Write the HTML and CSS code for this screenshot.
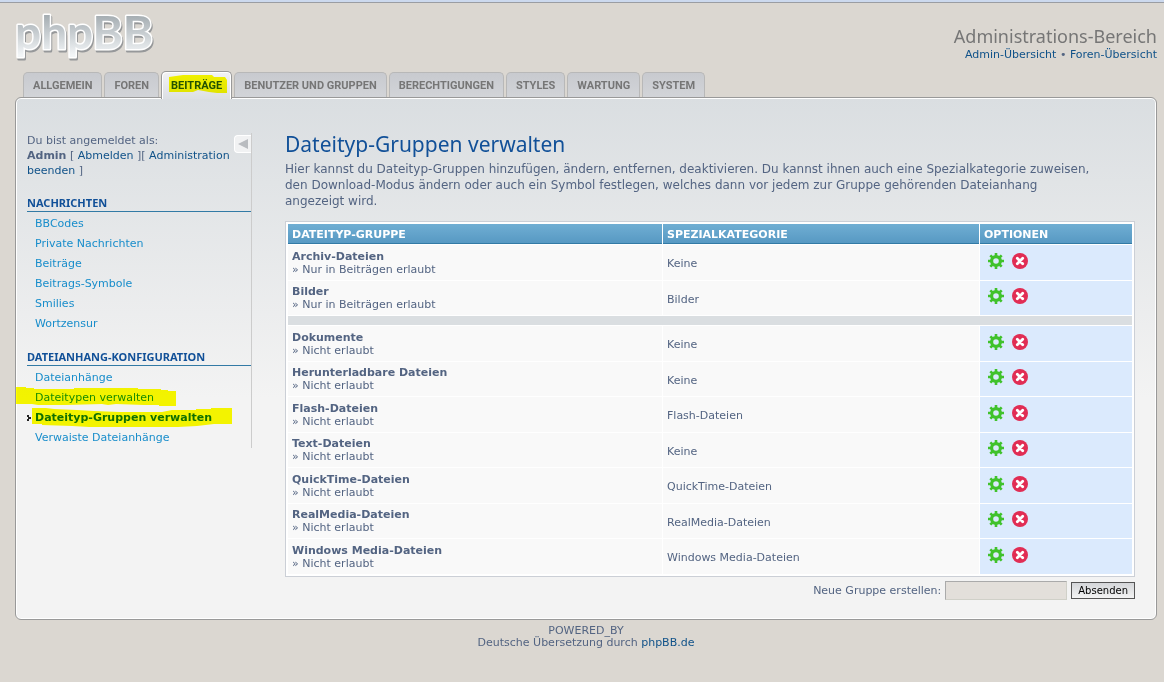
FILE: index.html
```html
<!DOCTYPE html>
<html lang="de">
<head>
<meta charset="utf-8">
<title>Dateityp-Gruppen verwalten</title>
<link rel="stylesheet" href="styles.css">
</head>
<body>
<svg class="defs" width="0" height="0" aria-hidden="true">
  <symbol id="gear" viewBox="0 0 16 16">
    <circle cx="8" cy="8" r="4.400" fill="none" stroke="#40c22b" stroke-width="3.200"/>
    <path d="M8 0v3M8 13v3M0 8h3M13 8h3M2.300 2.300l2.200 2.200M11.500 11.500l2.200 2.200M2.300 13.700l2.200-2.200M11.500 4.500l2.200-2.200" stroke="#40c22b" stroke-width="2.600"/>
  </symbol>
  <symbol id="cross" viewBox="0 0 16 16">
    <circle cx="8" cy="8" r="8" fill="#e12d54"/>
    <path d="M5.300 5.300l5.400 5.400M10.700 5.300l-5.400 5.400" stroke="#fff" stroke-width="2.800" stroke-linecap="round"/>
  </symbol>
</svg>

<header class="header">
  <a class="logo" href="#" aria-label="phpBB">
    <svg width="144" height="54" viewBox="0 0 144 54">
      <defs>
        <linearGradient id="logo-fill" gradientUnits="userSpaceOnUse" x1="0" y1="4" x2="0" y2="44">
          <stop offset="0" stop-color="#a4acb1"/>
          <stop offset="1" stop-color="#f2f5f7"/>
        </linearGradient>
      </defs>
      <text class="logo-text logo-shadow" x="1" y="40">phpBB</text>
      <text class="logo-text logo-edge" x="0" y="38">phpBB</text>
      <text class="logo-text logo-face" x="0" y="38">phpBB</text>
    </svg>
  </a>
  <div class="header-side">
    <h1>Administrations-Bereich</h1>
    <p><a href="#">Admin-Übersicht</a> • <a href="#">Foren-Übersicht</a></p>
  </div>
</header>

<nav class="tabs">
  <a href="#">ALLGEMEIN</a>
  <a href="#">FOREN</a>
  <a href="#" class="active">BEITRÄGE<svg class="marker marker-tab" viewBox="0 0 58 20" preserveAspectRatio="none"><path d="M0 2L14 0H43L45 2H56L58 5V18H48L40 17 29 15 24 17H0z"/></svg></a>
  <a href="#">BENUTZER UND GRUPPEN</a>
  <a href="#">BERECHTIGUNGEN</a>
  <a href="#">STYLES</a>
  <a href="#">WARTUNG</a>
  <a href="#">SYSTEM</a>
</nav>

<div class="panel">
  <aside class="sidebar">
    <button class="toggle" type="button" aria-label="Menü ausblenden"><svg width="10" height="10" viewBox="0 0 10 10"><path d="M0 5L10 0V10z" fill="#b9bcc0"/></svg></button>
    <p class="login">Du bist angemeldet als:<br><strong>Admin</strong> [ <a href="#">Abmelden</a> ][ <a href="#">Administration beenden</a> ]</p>
    <h2>NACHRICHTEN</h2>
    <ul>
      <li><a href="#">BBCodes</a></li>
      <li><a href="#">Private Nachrichten</a></li>
      <li><a href="#">Beiträge</a></li>
      <li><a href="#">Beitrags-Symbole</a></li>
      <li><a href="#">Smilies</a></li>
      <li><a href="#">Wortzensur</a></li>
    </ul>
    <h2>DATEIANHANG-KONFIGURATION</h2>
    <ul>
      <li><a href="#">Dateianhänge</a></li>
      <li><a href="#">Dateitypen verwalten</a><svg class="marker marker-types" viewBox="0 0 160 19" preserveAspectRatio="none"><path d="M0 0H10V1H18V2H58V1H122V2H145V3H152V4H160V20H143V18H128L100 17 92 18 86 17 50 18H22L16 17H0z"/></svg></li>
      <li class="current"><a href="#">Dateityp-Gruppen verwalten</a><svg class="marker marker-groups" viewBox="0 0 200 20" preserveAspectRatio="none"><path d="M0 0H14L22 1 45 2 62 3 88 4H130L140 2H164V1H179V0H200V16H182L165 18 146 19H57L40 18 10 17V16H0z"/></svg><svg class="arrow" width="4" height="6" viewBox="0 0 4 6"><path d="M0 0h2v2h2v2H2v2H0V4h1V2H0z" fill="#222"/></svg></li>
      <li><a href="#">Verwaiste Dateianhänge</a></li>
    </ul>
  </aside>

  <main class="main">
    <h1>Dateityp-Gruppen verwalten</h1>
    <p class="intro">Hier kannst du Dateityp-Gruppen hinzufügen, ändern, entfernen, deaktivieren. Du kannst ihnen auch eine Spezialkategorie zuweisen,<br>den Download-Modus ändern oder auch ein Symbol festlegen, welches dann vor jedem zur Gruppe gehörenden Dateianhang<br>angezeigt wird.</p>
    <table>
      <thead>
        <tr><th class="col-group">DATEITYP-GRUPPE</th><th>SPEZIALKATEGORIE</th><th class="col-options">OPTIONEN</th></tr>
      </thead>
      <tbody>
        <tr><td><strong>Archiv-Dateien</strong><br>» Nur in Beiträgen erlaubt</td><td>Keine</td><td class="options"><a href="#" aria-label="Bearbeiten"><svg><use href="#gear"/></svg></a><a href="#" aria-label="Löschen"><svg><use href="#cross"/></svg></a></td></tr>
        <tr><td><strong>Bilder</strong><br>» Nur in Beiträgen erlaubt</td><td>Bilder</td><td class="options"><a href="#" aria-label="Bearbeiten"><svg><use href="#gear"/></svg></a><a href="#" aria-label="Löschen"><svg><use href="#cross"/></svg></a></td></tr>
      </tbody>
      <tbody class="spacer"><tr><td colspan="3"></td></tr></tbody>
      <tbody>
        <tr><td><strong>Dokumente</strong><br>» Nicht erlaubt</td><td>Keine</td><td class="options"><a href="#" aria-label="Bearbeiten"><svg><use href="#gear"/></svg></a><a href="#" aria-label="Löschen"><svg><use href="#cross"/></svg></a></td></tr>
        <tr><td><strong>Herunterladbare Dateien</strong><br>» Nicht erlaubt</td><td>Keine</td><td class="options"><a href="#" aria-label="Bearbeiten"><svg><use href="#gear"/></svg></a><a href="#" aria-label="Löschen"><svg><use href="#cross"/></svg></a></td></tr>
        <tr><td><strong>Flash-Dateien</strong><br>» Nicht erlaubt</td><td>Flash-Dateien</td><td class="options"><a href="#" aria-label="Bearbeiten"><svg><use href="#gear"/></svg></a><a href="#" aria-label="Löschen"><svg><use href="#cross"/></svg></a></td></tr>
        <tr><td><strong>Text-Dateien</strong><br>» Nicht erlaubt</td><td>Keine</td><td class="options"><a href="#" aria-label="Bearbeiten"><svg><use href="#gear"/></svg></a><a href="#" aria-label="Löschen"><svg><use href="#cross"/></svg></a></td></tr>
        <tr><td><strong>QuickTime-Dateien</strong><br>» Nicht erlaubt</td><td>QuickTime-Dateien</td><td class="options"><a href="#" aria-label="Bearbeiten"><svg><use href="#gear"/></svg></a><a href="#" aria-label="Löschen"><svg><use href="#cross"/></svg></a></td></tr>
        <tr><td><strong>RealMedia-Dateien</strong><br>» Nicht erlaubt</td><td>RealMedia-Dateien</td><td class="options"><a href="#" aria-label="Bearbeiten"><svg><use href="#gear"/></svg></a><a href="#" aria-label="Löschen"><svg><use href="#cross"/></svg></a></td></tr>
        <tr><td><strong>Windows Media-Dateien</strong><br>» Nicht erlaubt</td><td>Windows Media-Dateien</td><td class="options"><a href="#" aria-label="Bearbeiten"><svg><use href="#gear"/></svg></a><a href="#" aria-label="Löschen"><svg><use href="#cross"/></svg></a></td></tr>
      </tbody>
    </table>
    <form class="quick">
      <label for="group-name">Neue Gruppe erstellen:</label>
      <input id="group-name" type="text">
      <button type="submit">Absenden</button>
    </form>
  </main>
</div>

<footer class="footer">POWERED_BY<br>Deutsche Übersetzung durch <a href="#">phpBB.de</a></footer>
</body>
</html>
```
FILE: styles.css
```css
* { box-sizing: border-box; }
body {
  margin: 0;
  padding: 0 7px 0 15px;
  min-height: 100vh;
  border-top: 2px solid #ccd9ee;
  background: #dbd7d1;
  box-shadow: inset 0 1px #9a9da3;
  color: #536482;
  font: 11px/13px Verdana, "DejaVu Sans", sans-serif;
}
h1, h2, p, ul { margin: 0; padding: 0; font-weight: normal; }
a { color: #105289; text-decoration: none; }
.defs { position: absolute; }

.header { display: flex; justify-content: space-between; height: 69px; padding-top: 9px; }
.logo svg { display: block; overflow: visible; }
.logo-text { font: 700 46px Lato, sans-serif; }
.logo-shadow { fill: #8d8f92; stroke: #96989a; stroke-width: 3px; stroke-linejoin: round; }
.logo-edge { fill: #fff; stroke: #fff; stroke-width: 3px; stroke-linejoin: round; }
.logo-face { fill: url(#logo-fill); }
.header-side { padding-top: 13px; text-align: right; }
.header-side h1 { color: #767676; font: 18px/24px "Trebuchet MS", "Noto Sans", sans-serif; }
.header-side p { line-height: 14px; }

.tabs {
  display: flex;
  align-items: flex-end;
  gap: 2px;
  height: 26px;
  padding-left: 8px;
}
.tabs a {
  position: relative;
  height: 25px;
  padding: 0 9px;
  border: 1px solid #b8b8b8;
  border-bottom: 0;
  border-radius: 5px 5px 0 0;
  background: linear-gradient(#c8cacf, #d2d4d8);
  color: #767676;
  font: bold 11px/26px Roboto, sans-serif;
}
.tabs .active {
  z-index: 1;
  height: 28px;
  margin-bottom: -2px;
  border-color: #999;
  background: linear-gradient(#f2f2f4, #dcdfe3);
  box-shadow: inset 1px 1px #fff, inset -1px 0 #fff;
  color: #23528f;
  line-height: 28px;
}

/* Highlighter strokes lying over the text */
.marker { position: absolute; fill: #ff0; mix-blend-mode: multiply; pointer-events: none; }
.marker-tab { left: 7px; top: 3px; width: 58px; height: 20px; }
.marker-types { left: -11px; top: -1px; width: 160px; height: 19px; }
.marker-groups { left: 5px; top: 0; width: 200px; height: 20px; }

.panel {
  display: flex;
  gap: 33px;
  min-height: 523px;
  padding: 35px 21px 18px 11px;
  border: 1px solid #999;
  border-radius: 6px;
  background: linear-gradient(#dadee1, #f3f3f3 300px);
  box-shadow: inset 0 0 0 1px #fff;
}
.sidebar {
  position: relative;
  flex: 0 0 225px;
  height: 315px;
  border-right: 1px solid #ccc;
}
.toggle {
  position: absolute;
  top: 2px;
  right: 0;
  display: flex;
  align-items: center;
  justify-content: center;
  width: 17px;
  height: 18px;
  padding: 0;
  border: 1px solid #fff;
  border-right: 0;
  border-radius: 4px 0 0 4px;
  background: #f1f2f3;
}
.login { height: 63px; line-height: 15px; padding-right: 8px; }
.sidebar h2 {
  height: 16px;
  border-bottom: 1px solid #327aa5;
  color: #115098;
  font: bold 11px/14px "Noto Sans", sans-serif;
}
.sidebar ul { list-style: none; padding-top: 2px; margin-bottom: 16px; }
.sidebar li { position: relative; height: 20px; padding-left: 8px; line-height: 20px; }
.sidebar li a { color: #188dcb; }
.sidebar .current a { color: #117098; font-weight: bold; }
.arrow { position: absolute; left: 0; top: 7px; }

.main { flex: 1; min-width: 0; }
.main h1 { margin-bottom: 6px; color: #115098; font: 21px/22px "Trebuchet MS", "Noto Sans", sans-serif; }
.intro { margin-bottom: 12px; font-size: 12px; line-height: 16px; }
table {
  width: 100%;
  padding: 1px;
  border: 1px solid #cbcfd6;
  border-spacing: 1px;
  background: #fff;
}
th {
  height: 20px;
  padding: 1px 4px 0;
  border-bottom: 1px solid #327aa5;
  background: linear-gradient(#70aed3, #5799c3);
  color: #fff;
  font-size: 11px;
  text-align: left;
}
.col-group { width: 374px; }
.col-options { width: 152px; }
td { height: 34px; padding: 2px 4px 0; background: #f9f9f9; }
tr:nth-child(odd) td { height: 35px; }
td:first-child { padding: 0 4px; }
td.options { padding: 0 8px 4px; background: #dbeafd; }
.options a { display: inline-block; margin-right: 8px; vertical-align: middle; }
.options svg { display: block; width: 16px; height: 16px; }
.spacer tr:nth-child(odd) td { height: 9px; padding: 0; background: #dadee1; }

.quick { display: flex; justify-content: flex-end; gap: 4px; padding-top: 4px; line-height: 19px; }
.quick input {
  width: 122px;
  height: 19px;
  padding: 0 3px;
  border: 1px solid #d0d0c8;
  border-top-color: #aaa;
  border-left-color: #aaa;
  background: #e3dfda;
}
.quick button {
  height: 17px;
  margin-top: 1px;
  padding: 0 6px;
  border: 1px solid #555;
  background: linear-gradient(#d4d6d9, #f3f3f3);
  color: #000;
  font: 10px/14px Verdana, "DejaVu Sans", sans-serif;
}
.footer { padding-top: 5px; text-align: center; font-size: 11px; line-height: 12px; }
```
